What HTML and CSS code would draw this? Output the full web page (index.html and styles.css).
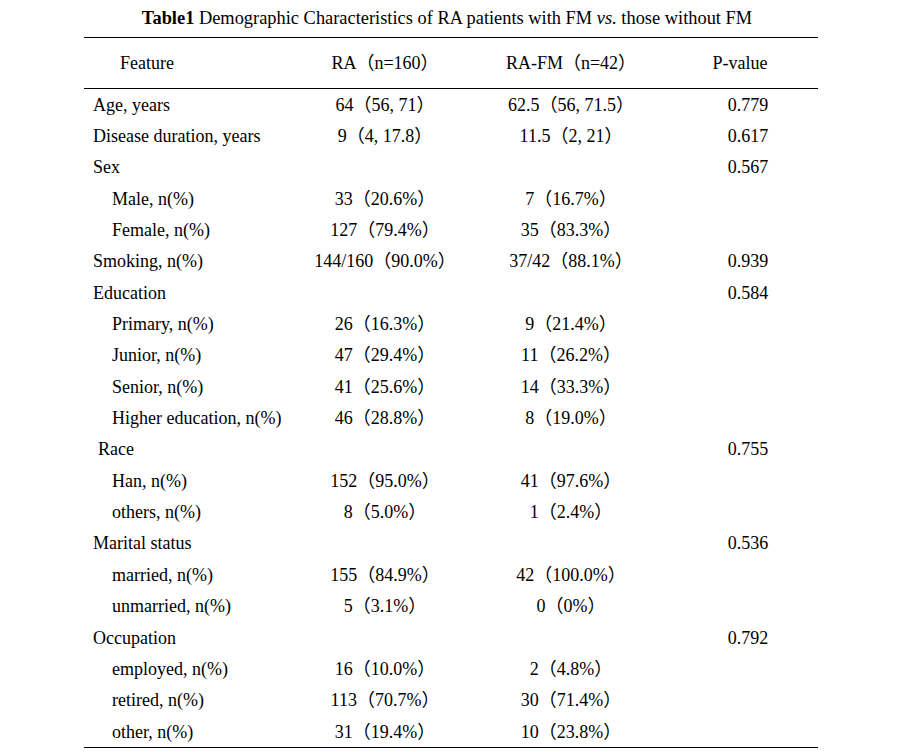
FILE: index.html
```html
<!DOCTYPE html>
<html>
<head>
<meta charset="utf-8">
<link rel="stylesheet" href="styles.css">
</head>
<body>
<div class="page">
  <div class="title"><b>Table1</b> Demographic Characteristics of RA patients with FM <i>vs.</i> those without FM</div>
  <div class="table">
    <div class="row head">
      <div class="c1 hfeat">Feature</div>
      <div class="c2">RA（n=160）</div>
      <div class="c3">RA-FM（n=42）</div>
      <div class="c4 hp">P-value</div>
    </div>
    <div class="body">
      <div class="row"><div class="c1">Age, years</div><div class="c2">64（56, 71）</div><div class="c3">62.5（56, 71.5）</div><div class="c4">0.779</div></div>
      <div class="row"><div class="c1">Disease duration, years</div><div class="c2">9（4, 17.8）</div><div class="c3">11.5（2, 21）</div><div class="c4">0.617</div></div>
      <div class="row"><div class="c1">Sex</div><div class="c2"></div><div class="c3"></div><div class="c4">0.567</div></div>
      <div class="row"><div class="c1 sub">Male, n(%)</div><div class="c2">33（20.6%）</div><div class="c3">7（16.7%）</div><div class="c4"></div></div>
      <div class="row"><div class="c1 sub">Female, n(%)</div><div class="c2">127（79.4%）</div><div class="c3">35（83.3%）</div><div class="c4"></div></div>
      <div class="row"><div class="c1">Smoking, n(%)</div><div class="c2">144/160（90.0%）</div><div class="c3">37/42（88.1%）</div><div class="c4">0.939</div></div>
      <div class="row"><div class="c1">Education</div><div class="c2"></div><div class="c3"></div><div class="c4">0.584</div></div>
      <div class="row"><div class="c1 sub">Primary, n(%)</div><div class="c2">26（16.3%）</div><div class="c3">9（21.4%）</div><div class="c4"></div></div>
      <div class="row"><div class="c1 sub">Junior, n(%)</div><div class="c2">47（29.4%）</div><div class="c3">11（26.2%）</div><div class="c4"></div></div>
      <div class="row"><div class="c1 sub">Senior, n(%)</div><div class="c2">41（25.6%）</div><div class="c3">14（33.3%）</div><div class="c4"></div></div>
      <div class="row"><div class="c1 sub">Higher education, n(%)</div><div class="c2">46（28.8%）</div><div class="c3">8（19.0%）</div><div class="c4"></div></div>
      <div class="row"><div class="c1 race">Race</div><div class="c2"></div><div class="c3"></div><div class="c4">0.755</div></div>
      <div class="row"><div class="c1 sub">Han, n(%)</div><div class="c2">152（95.0%）</div><div class="c3">41（97.6%）</div><div class="c4"></div></div>
      <div class="row"><div class="c1 sub">others, n(%)</div><div class="c2">8（5.0%）</div><div class="c3">1（2.4%）</div><div class="c4"></div></div>
      <div class="row"><div class="c1">Marital status</div><div class="c2"></div><div class="c3"></div><div class="c4">0.536</div></div>
      <div class="row"><div class="c1 sub">married, n(%)</div><div class="c2">155（84.9%）</div><div class="c3">42（100.0%）</div><div class="c4"></div></div>
      <div class="row"><div class="c1 sub">unmarried, n(%)</div><div class="c2">5（3.1%）</div><div class="c3">0（0%）</div><div class="c4"></div></div>
      <div class="row"><div class="c1">Occupation</div><div class="c2"></div><div class="c3"></div><div class="c4">0.792</div></div>
      <div class="row"><div class="c1 sub">employed, n(%)</div><div class="c2">16（10.0%）</div><div class="c3">2（4.8%）</div><div class="c4"></div></div>
      <div class="row"><div class="c1 sub">retired, n(%)</div><div class="c2">113（70.7%）</div><div class="c3">30（71.4%）</div><div class="c4"></div></div>
      <div class="row"><div class="c1 sub">other, n(%)</div><div class="c2">31（19.4%）</div><div class="c3">10（23.8%）</div><div class="c4"></div></div>
    </div>
  </div>
</div>
</body>
</html>
```

FILE: styles.css
```css
html, body {
  margin: 0;
  padding: 0;
  background: #fff;
}
body {
  font-family: "Liberation Serif", "Noto Sans CJK SC", serif;
  color: #000;
  font-size: 18px;
}
.page {
  width: 912px;
  height: 752px;
  overflow: hidden;
}
.title {
  height: 37px;
  line-height: 36px;
  font-size: 18.4px;
  text-align: center;
  padding-right: 18px;
}
.table {
  margin-left: 84px;
  width: 734px;
  border-top: 1.5px solid #000;
  border-bottom: 1.5px solid #000;
}
.row {
  display: grid;
  grid-template-columns: 206px 190px 182px 156px;
  height: 31.35px;
  align-items: center;
  line-height: 20px;
}
.row.head {
  height: 50px;
  border-bottom: 1.5px solid #000;
}
.c1 {
  padding-left: 9px;
  white-space: nowrap;
}
.c1.sub {
  padding-left: 28px;
}
.c1.race {
  padding-left: 14px;
}
.c1.hfeat {
  padding-left: 36px;
}
.c2, .c3, .c4 {
  text-align: center;
  white-space: nowrap;
}
.c4 {
  padding-left: 16px;
}
.c4.hp {
  padding-left: 0;
}
```
